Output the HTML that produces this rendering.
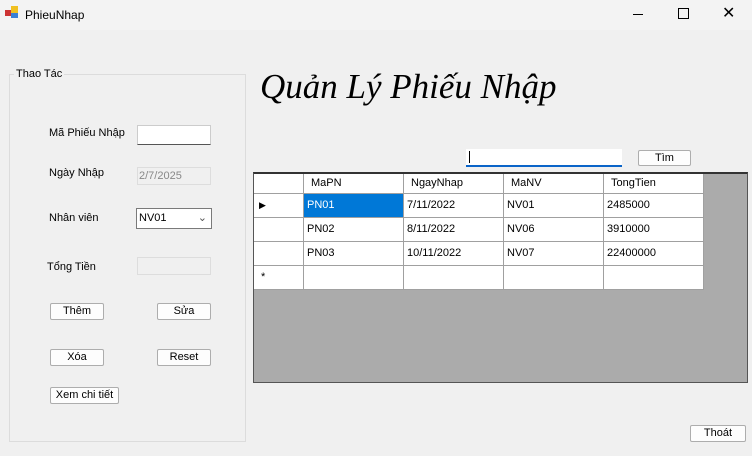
<html><head><style>
body{margin:0;width:752px;height:456px;background:#f0f0f0;font-family:"Liberation Sans",sans-serif;font-size:11px;color:#000;position:relative;overflow:hidden}
.a{position:absolute}
.tb{background:#fff;border:1px solid #ccc;border-bottom:1px solid #555;box-sizing:border-box}
.btn{position:absolute;background:#fdfdfd;border:1px solid #adadad;border-radius:2px;box-sizing:border-box;text-align:center;line-height:14px;font-size:11px}
.c{position:absolute;border-right:1px solid #a0a0a0;border-bottom:1px solid #a0a0a0;box-sizing:border-box;background:#fff;padding:5px 0 0 3px}
</style></head><body>
<div class="a" style="left:0;top:0;width:752px;height:30px;background:#f3f3f3"></div>
<div class="a" style="left:5px;top:10px;width:6px;height:6px;background:#c33"></div>
<div class="a" style="left:11px;top:6px;width:7px;height:7px;background:#f0c020"></div>
<div class="a" style="left:11px;top:13px;width:7px;height:5px;background:#3a7fd5"></div>
<div class="a" style="left:25px;top:8px;font-size:12px">PhieuNhap</div>
<div class="a" style="left:633px;top:14px;width:10px;height:1px;background:#000"></div>
<div class="a" style="left:678px;top:8px;width:9px;height:9px;border:1px solid #000"></div>
<div class="a" style="left:722px;top:3px;font-size:16px">✕</div>
<div class="a" style="left:9px;top:74px;width:237px;height:368px;border:1px solid #dcdcdc;box-sizing:border-box"></div>
<div class="a" style="left:14px;top:68px;background:#f0f0f0;padding:0 2px">Thao Tác</div>
<div class="a" style="left:49px;top:127px">Mã Phiếu Nhập</div>
<div class="a tb" style="left:137px;top:125px;width:74px;height:20px"></div>
<div class="a" style="left:49px;top:167px">Ngày Nhập</div>
<div class="a" style="left:137px;top:167px;width:74px;height:18px;border:1px solid #ddd;box-sizing:border-box;color:#888;padding:2px 0 0 1px">2/7/2025</div>
<div class="a" style="left:49px;top:212px">Nhân viên</div>
<div class="a" style="left:136px;top:208px;width:76px;height:21px;background:#fff;border:1px solid #7a7a7a;box-sizing:border-box;padding:3px 0 0 2px">NV01<span style="position:absolute;right:4px;top:2px;color:#555">⌄</span></div>
<div class="a" style="left:47px;top:261px">Tổng Tiền</div>
<div class="a" style="left:137px;top:257px;width:74px;height:18px;border:1px solid #ddd;box-sizing:border-box"></div>
<div class="btn" style="left:50px;top:303px;width:54px;height:17px">Thêm</div>
<div class="btn" style="left:157px;top:303px;width:54px;height:17px">Sửa</div>
<div class="btn" style="left:50px;top:349px;width:54px;height:17px">Xóa</div>
<div class="btn" style="left:157px;top:349px;width:54px;height:17px">Reset</div>
<div class="btn" style="left:50px;top:387px;width:69px;height:17px">Xem chi tiết</div>
<div class="a" style="left:260px;top:67px;font-family:'Liberation Serif',serif;font-style:italic;font-size:35px">Quản Lý Phiếu Nhập</div>
<div class="a" style="left:466px;top:149px;width:156px;height:18px;background:#fff;border-bottom:2px solid #0a64c8;box-sizing:border-box"><div style="position:absolute;left:3px;top:2px;width:1px;height:12px;background:#000"></div></div>
<div class="btn" style="left:638px;top:150px;width:53px;height:16px">Tìm</div>
<div class="a" style="left:253px;top:172px;width:495px;height:211px;background:#ababab;border:1px solid #555;border-top:2px solid #333;box-sizing:border-box"></div>
<div class="c" style="left:254px;top:174px;width:50px;height:20px"></div>
<div class="c" style="left:304px;top:174px;width:100px;height:20px;padding:3px 0 0 7px">MaPN</div>
<div class="c" style="left:404px;top:174px;width:100px;height:20px;padding:3px 0 0 7px">NgayNhap</div>
<div class="c" style="left:504px;top:174px;width:100px;height:20px;padding:3px 0 0 7px">MaNV</div>
<div class="c" style="left:604px;top:174px;width:100px;height:20px;padding:3px 0 0 7px">TongTien</div>
<div class="c" style="left:254px;top:194px;width:50px;height:24px;font-size:9px;padding:6px 0 0 5px">▶</div>
<div class="c" style="left:304px;top:194px;width:100px;height:24px;background:#0078d7;color:#fff">PN01</div>
<div class="c" style="left:404px;top:194px;width:100px;height:24px">7/11/2022</div>
<div class="c" style="left:504px;top:194px;width:100px;height:24px">NV01</div>
<div class="c" style="left:604px;top:194px;width:100px;height:24px">2485000</div>
<div class="c" style="left:254px;top:218px;width:50px;height:24px"></div>
<div class="c" style="left:304px;top:218px;width:100px;height:24px">PN02</div>
<div class="c" style="left:404px;top:218px;width:100px;height:24px">8/11/2022</div>
<div class="c" style="left:504px;top:218px;width:100px;height:24px">NV06</div>
<div class="c" style="left:604px;top:218px;width:100px;height:24px">3910000</div>
<div class="c" style="left:254px;top:242px;width:50px;height:24px"></div>
<div class="c" style="left:304px;top:242px;width:100px;height:24px">PN03</div>
<div class="c" style="left:404px;top:242px;width:100px;height:24px">10/11/2022</div>
<div class="c" style="left:504px;top:242px;width:100px;height:24px">NV07</div>
<div class="c" style="left:604px;top:242px;width:100px;height:24px">22400000</div>
<div class="c" style="left:254px;top:266px;width:50px;height:24px;padding:5px 0 0 7px">*</div>
<div class="c" style="left:304px;top:266px;width:100px;height:24px"></div>
<div class="c" style="left:404px;top:266px;width:100px;height:24px"></div>
<div class="c" style="left:504px;top:266px;width:100px;height:24px"></div>
<div class="c" style="left:604px;top:266px;width:100px;height:24px"></div>
<div class="btn" style="left:690px;top:425px;width:56px;height:17px">Thoát</div>
</body></html>
